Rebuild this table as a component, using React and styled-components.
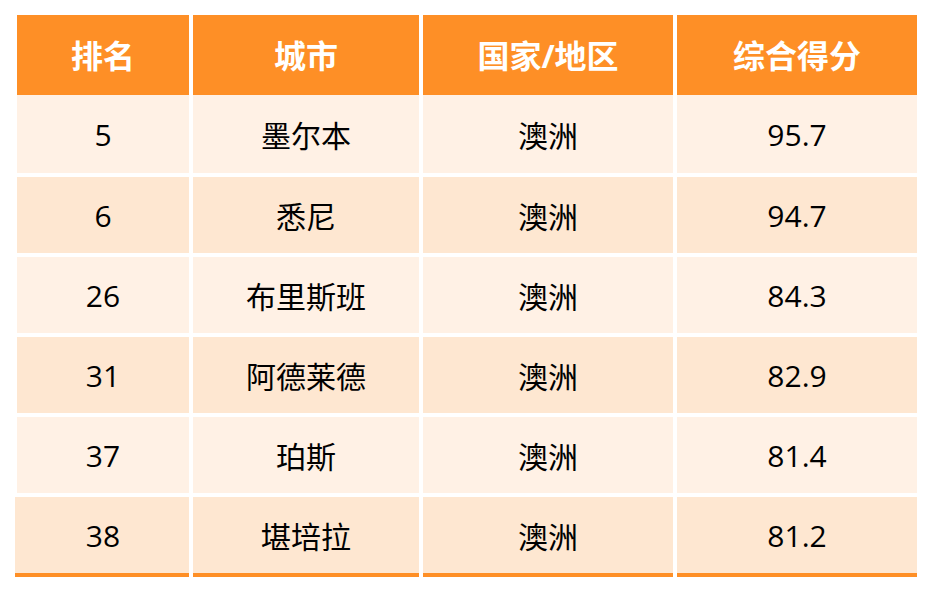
import React from "react";
import styled, { createGlobalStyle } from "styled-components";

const Global = createGlobalStyle`
  html, body { margin: 0; padding: 0; background: #ffffff; }
  body { font-family: "Open Sans", "Noto Sans CJK SC", sans-serif; }
`;

const Page = styled.div`
  padding: 15px 0 0 17px;
  width: 932px;
  height: 592px;
  box-sizing: border-box;
`;

const Table = styled.div`
  display: grid;
  grid-template-columns: 172px 226px 250px 240px;
  column-gap: 4px;
  width: 900px;
`;

const HeadCell = styled.div`
  height: 80px;
  background: #fe8f26;
  color: #ffffff;
  font-weight: 700;
  font-size: 32px;
  display: flex;
  align-items: center;
  justify-content: center;
  padding-bottom: 3px;
  box-sizing: border-box;
`;

const Cell = styled.div`
  height: ${(p) => (p.$first ? 82 : 80)}px;
  background: ${(p) => (p.$alt ? "#fee7d1" : "#fff1e5")};
  border-bottom: 4px solid ${(p) => (p.$last ? "#fe8f26" : "#ffffff")};
  box-sizing: border-box;
  color: #000000;
  font-size: 30px;
  display: flex;
  align-items: center;
  justify-content: center;
  margin-left: ${(p) => (p.$last && p.$col0 ? "-2px" : "0")};
  padding-left: ${(p) => (p.$last && p.$col0 ? "2px" : "0")};
`;

const headers = ["排名", "城市", "国家/地区", "综合得分"];
const rows = [
  ["5", "墨尔本", "澳洲", "95.7"],
  ["6", "悉尼", "澳洲", "94.7"],
  ["26", "布里斯班", "澳洲", "84.3"],
  ["31", "阿德莱德", "澳洲", "82.9"],
  ["37", "珀斯", "澳洲", "81.4"],
  ["38", "堪培拉", "澳洲", "81.2"],
];

export default function App() {
  return (
    <>
      <Global />
      <Page>
        <Table>
          {headers.map((h) => (
            <HeadCell key={h}>{h}</HeadCell>
          ))}
          {rows.map((r, i) =>
            r.map((v, j) => (
              <Cell
                key={`${i}-${j}`}
                $alt={i % 2 === 1}
                $first={i === 0}
                $last={i === rows.length - 1}
                $col0={j === 0}
              >
                {v}
              </Cell>
            ))
          )}
        </Table>
      </Page>
    </>
  );
}
